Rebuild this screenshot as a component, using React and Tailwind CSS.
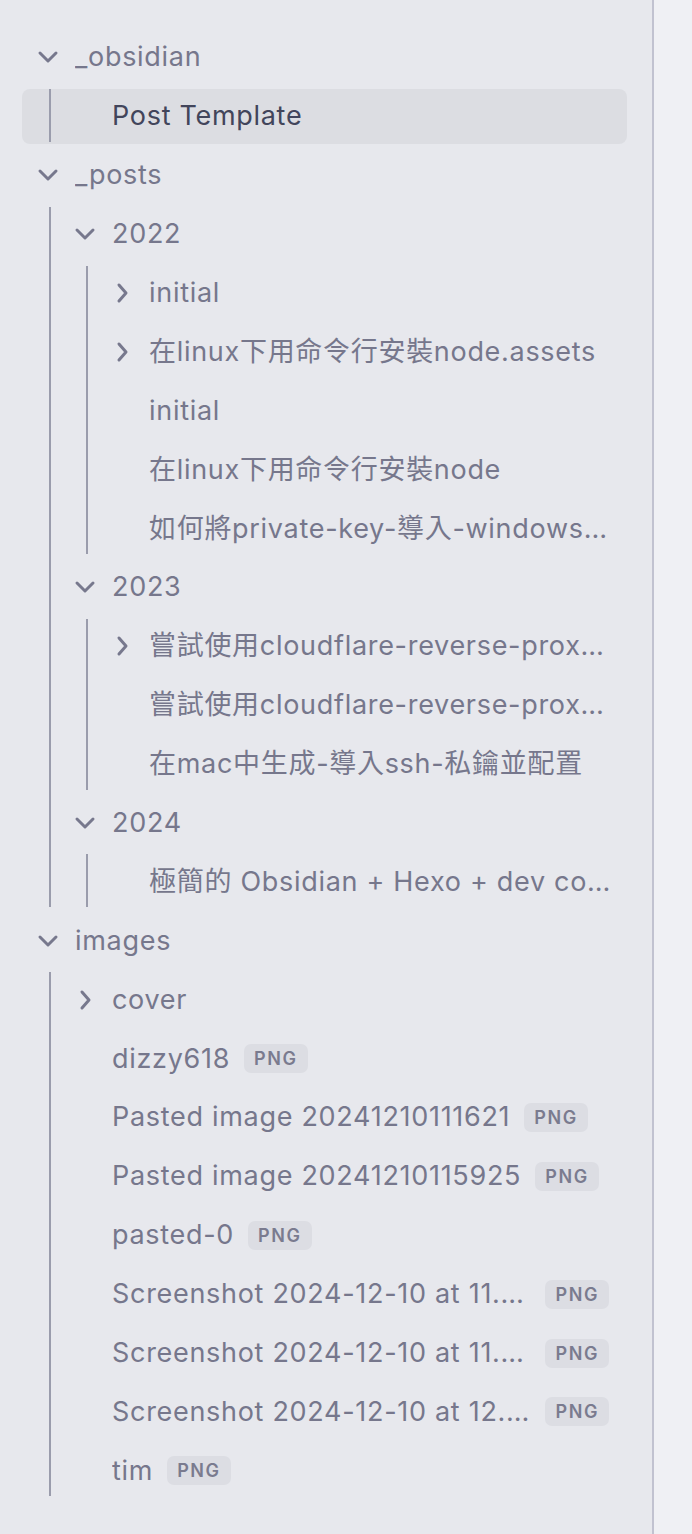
import React from "react";

const tree = [
  {
    name: "_obsidian",
    open: true,
    children: [{ name: "Post Template", active: true }],
  },
  {
    name: "_posts",
    open: true,
    children: [
      {
        name: "2022",
        open: true,
        children: [
          { name: "initial", folder: true },
          { name: "在linux下用命令行安裝node.assets", folder: true },
          { name: "initial" },
          { name: "在linux下用命令行安裝node" },
          { name: "如何將private-key-導入-windows…" },
        ],
      },
      {
        name: "2023",
        open: true,
        children: [
          { name: "嘗試使用cloudflare-reverse-prox…", folder: true },
          { name: "嘗試使用cloudflare-reverse-prox…" },
          { name: "在mac中生成-導入ssh-私鑰並配置" },
        ],
      },
      {
        name: "2024",
        open: true,
        children: [{ name: "極簡的 Obsidian + Hexo + dev co…" }],
      },
    ],
  },
  {
    name: "images",
    open: true,
    children: [
      { name: "cover", folder: true },
      { name: "dizzy618", badge: "PNG" },
      { name: "Pasted image 20241210111621", badge: "PNG" },
      { name: "Pasted image 20241210115925", badge: "PNG" },
      { name: "pasted-0", badge: "PNG" },
      { name: "Screenshot 2024-12-10 at 11.…", badge: "PNG", fill: true },
      { name: "Screenshot 2024-12-10 at 11.…", badge: "PNG", fill: true },
      { name: "Screenshot 2024-12-10 at 12.…", badge: "PNG", fill: true },
      { name: "tim", badge: "PNG" },
    ],
  },
];

const padByDepth = ["pl-[15px]", "pl-[52px]", "pl-[89px]"];
const lineByDepth = ["left-[49px]", "left-[86px]", "left-[123px]"];

function ChevronDown() {
  return (
    <svg width="22" height="22" viewBox="0 0 22 22" fill="none">
      <polyline
        points="3,7 11,15 19,7"
        stroke="#77788d"
        strokeWidth="3"
        strokeLinecap="round"
        strokeLinejoin="round"
      />
    </svg>
  );
}

function ChevronRight() {
  return (
    <svg width="22" height="22" viewBox="0 0 22 22" fill="none">
      <polyline
        points="8,3 15,11 8,19"
        stroke="#77788d"
        strokeWidth="3"
        strokeLinecap="round"
        strokeLinejoin="round"
      />
    </svg>
  );
}

function Row({ node, depth }) {
  const isFolder = node.folder || node.children;
  return (
    <div className="h-[58.9px] py-[2px] ml-[22px] mr-[25px]">
      <div
        className={
          "h-full flex items-center rounded-[8px] pr-[14px] " +
          padByDepth[depth] +
          (node.active ? " bg-[#dcdde2]" : "")
        }
      >
        <div className="w-[22px] h-[22px] shrink-0 flex items-center justify-center">
          {isFolder ? node.open ? <ChevronDown /> : <ChevronRight /> : null}
        </div>
        <div
          className={
            "ml-[16px] flex items-center min-w-0 " +
            (node.fill ? "flex-1 pr-[4px]" : "")
          }
        >
          <span
            className={
              "truncate text-[27px] leading-[34px] tracking-[0.7px] " +
              (node.fill ? "flex-1 " : "") +
              (node.active ? "text-[#42455b]" : "text-[#76778c]")
            }
          >
            {node.name}
          </span>
          {node.badge ? (
            <span className="shrink-0 ml-[14px] h-[29px] px-[10px] rounded-[7px] bg-[#dcdde3] text-[#7a7b8f] text-[18px] font-semibold tracking-[1.6px] flex items-center">
              {node.badge}
            </span>
          ) : null}
        </div>
      </div>
    </div>
  );
}

function Node({ node, depth }) {
  return (
    <div>
      <Row node={node} depth={depth} />
      {node.children && node.open ? (
        <div className="relative">
          {node.children.map((c, i) => (
            <Node key={i} node={c} depth={depth + 1} />
          ))}
          <div
            className={
              "absolute top-[2px] bottom-[4px] w-[2px] bg-[#9a9cac] " +
              lineByDepth[depth]
            }
          />
        </div>
      ) : null}
    </div>
  );
}

export default function App() {
  return (
    <div className="flex w-[692px] h-[1534px] overflow-hidden">
      <div className="w-[652px] shrink-0 bg-[#e7e8ed] pt-[28px] font-['Inter','Noto_Sans_CJK_TC',sans-serif]">
        {tree.map((n, i) => (
          <Node key={i} node={n} depth={0} />
        ))}
      </div>
      <div className="w-[2px] shrink-0 bg-[#c1c2d0]" />
      <div className="flex-1 bg-[#eff0f4]" />
    </div>
  );
}
